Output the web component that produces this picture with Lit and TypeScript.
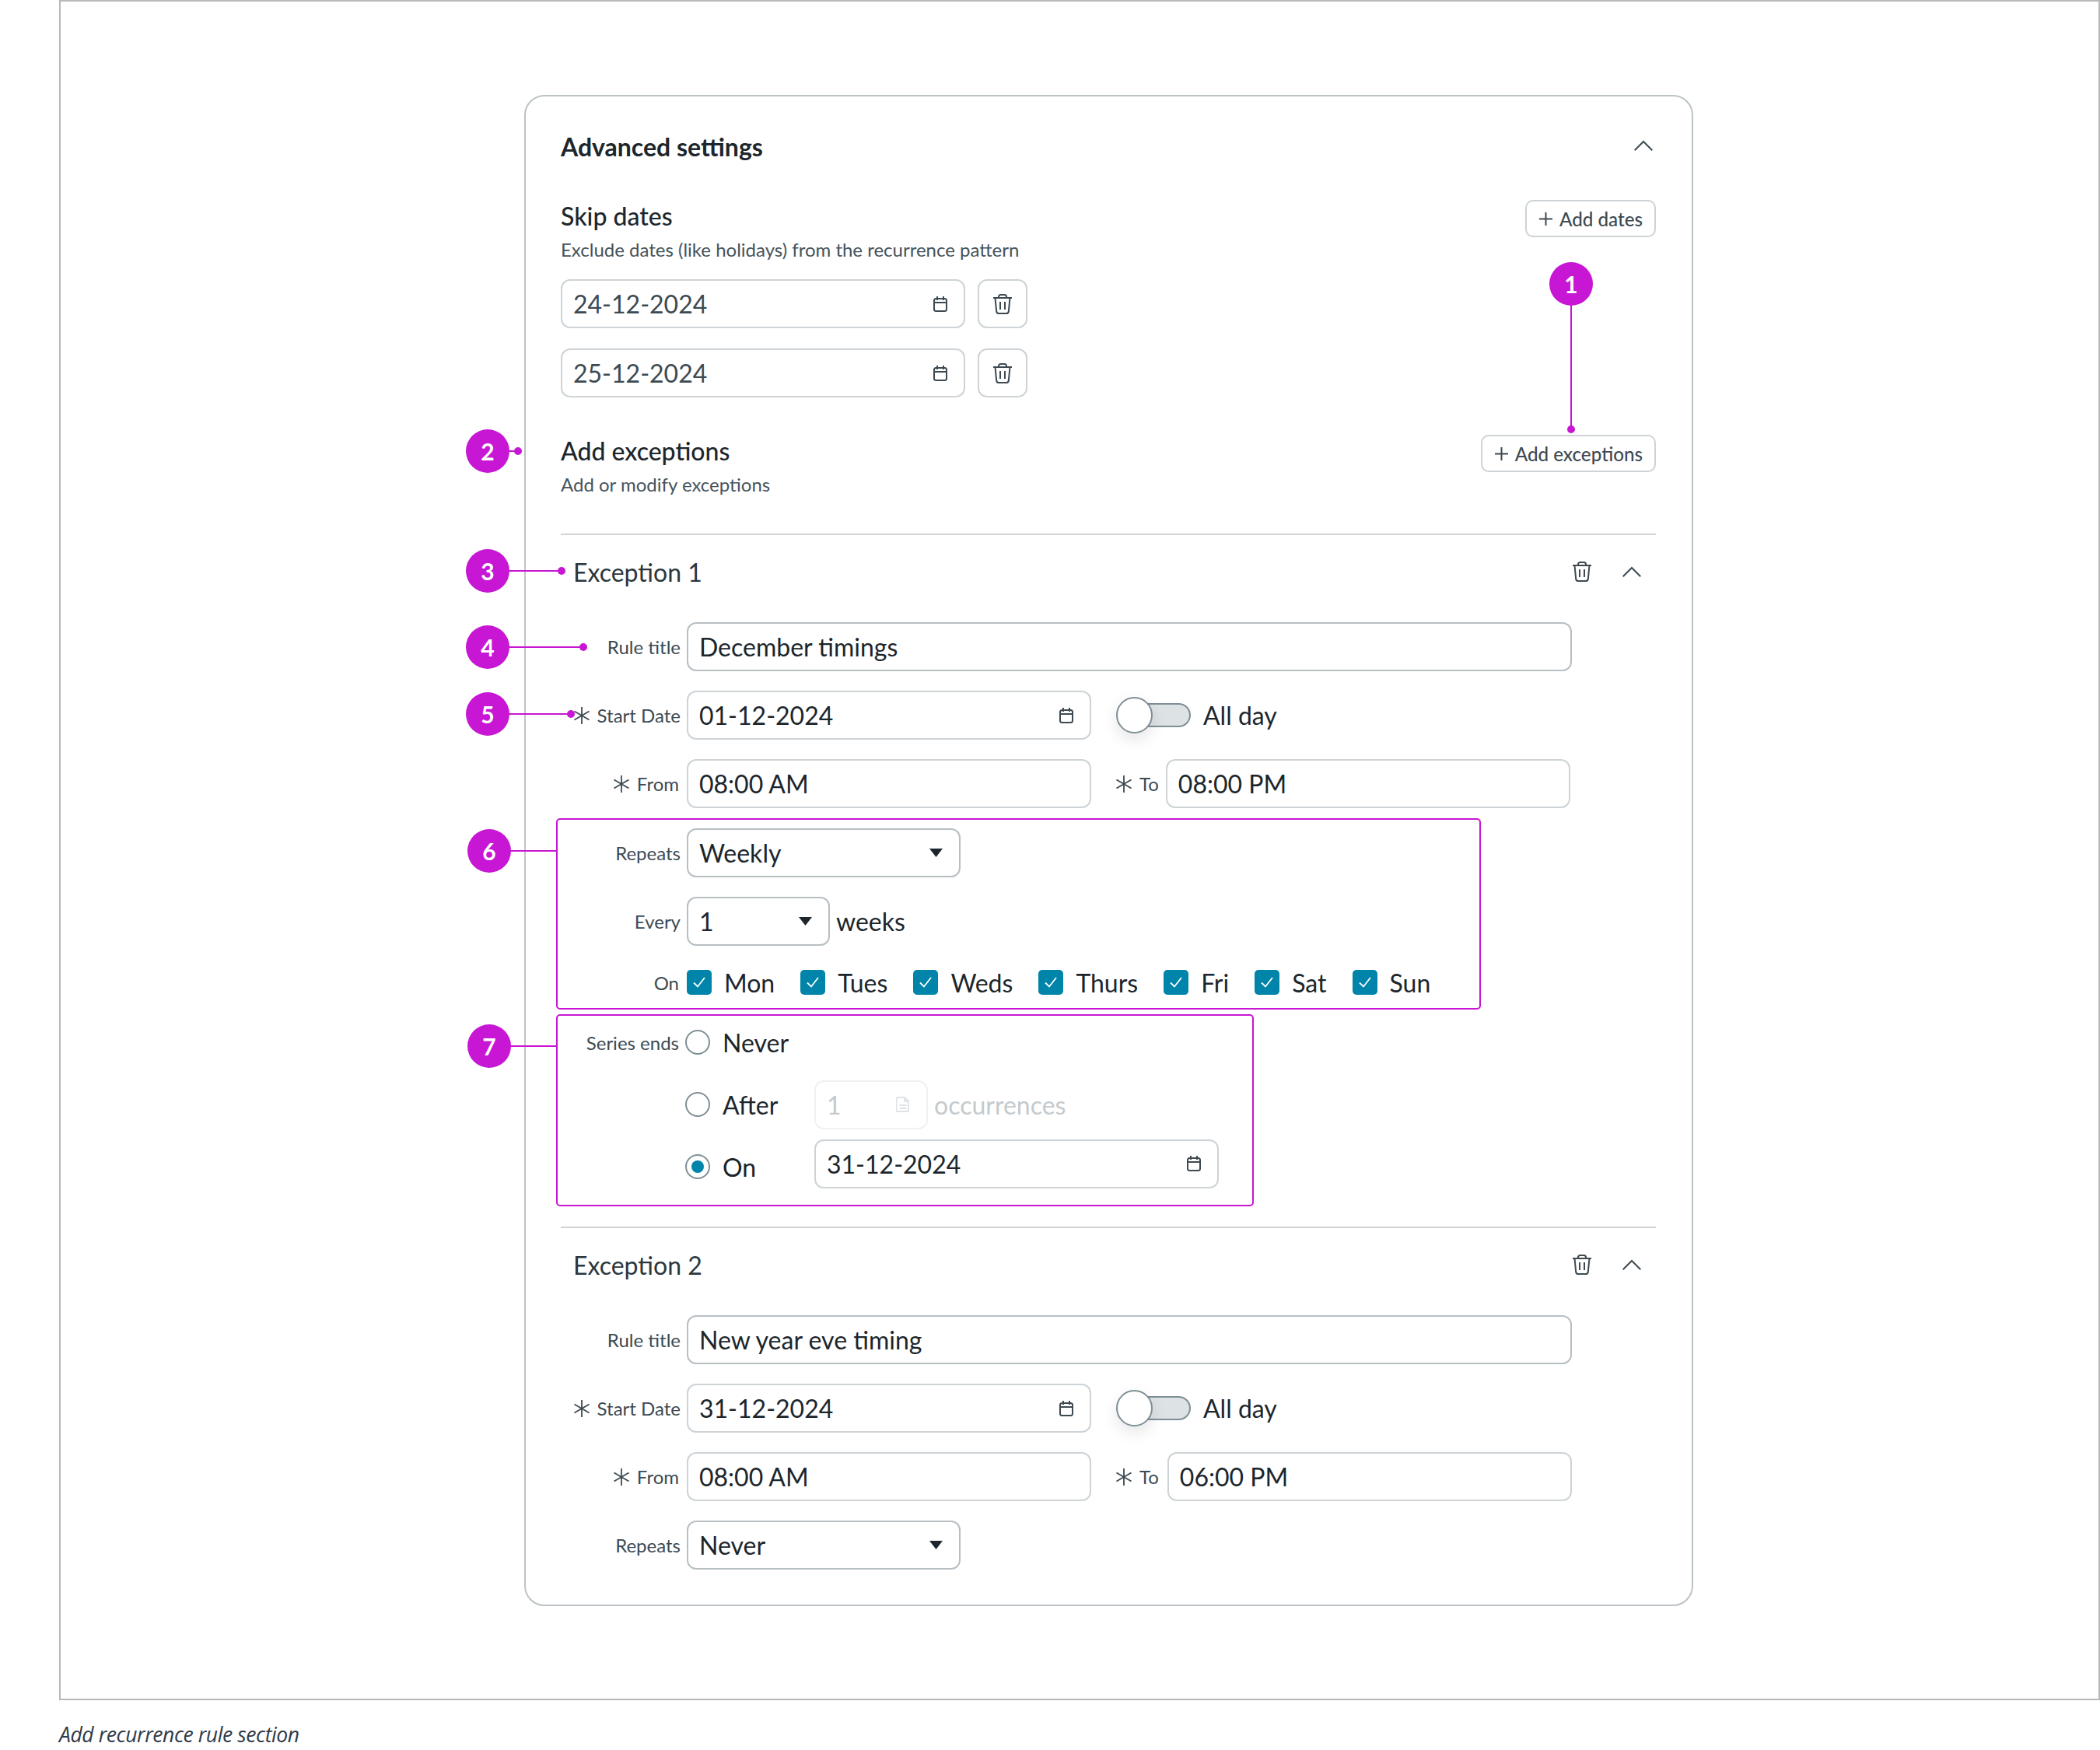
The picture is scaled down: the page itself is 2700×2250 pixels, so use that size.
import { LitElement, html, css } from "lit";
import { customElement } from "lit/decorators.js";

const cal = html`<svg class="ic cal" viewBox="0 0 18 20"><rect x="1" y="3" width="16" height="16" rx="2.500" /><path d="M1 8h16M5 0v5M13 0v5" /></svg>`;
const trash = html`<svg class="ic trash" viewBox="0 0 24 28"><path d="M0 6h24M7 6V4.500A2.500 2.500 0 0 1 9.500 2h5A2.500 2.500 0 0 1 17 4.500V6M2.500 6l1.700 17.500a3 3 0 0 0 3 2.500h9.600a3 3 0 0 0 3-2.500L21.500 6M9 11v10M15 11v10" /></svg>`;
const chev = html`<svg class="ic chev" viewBox="0 0 24 14"><path d="M0.700 13.300L12 2l11.300 11.300" /></svg>`;
const star = html`<svg class="ic star" viewBox="0 0 22 22"><path d="M11 0v22M1.500 5.500l19 11M20.500 5.500l-19 11" /></svg>`;
const plus = html`<svg class="ic plus" viewBox="0 0 19 19"><path d="M9.500 1v17M1 9.500h17" /></svg>`;
const caret = html`<svg class="caret" viewBox="0 0 17 11"><path d="M0 0h17L8.500 11z" /></svg>`;
const check = html`<svg class="tick" viewBox="0 0 20 20"><path d="M3 10.500l5 5L17 4" /></svg>`;
const doc = html`<svg class="ic doc" viewBox="0 0 18 20"><path d="M2.500 1h8.500l5 5v11a2 2 0 0 1-2 2h-11.500a2 2 0 0 1-2-2V3a2 2 0 0 1 2-2zM11 1v5h5M4.500 11h9M4.500 15h9" /></svg>`;

const marks = [
  { n: 1, x: 2020, y: 365, x2: 2020, y2: 552, dot: true },
  { n: 2, x: 627, y: 580, x2: 666, y2: 580, dot: true },
  { n: 3, x: 627, y: 734, x2: 722, y2: 734, dot: true },
  { n: 4, x: 627, y: 832, x2: 750, y2: 832, dot: true },
  { n: 5, x: 627, y: 918, x2: 734, y2: 918, dot: true },
  { n: 6, x: 629, y: 1094, x2: 715, y2: 1094, dot: false },
  { n: 7, x: 629, y: 1345, x2: 715, y2: 1345, dot: false },
];

@customElement("app-root")
export class AppRoot extends LitElement {
  static styles = css`
    :host { display: block; width: 2700px; height: 2250px; position: relative; background: #fff; font-family: Lato, "Liberation Sans", sans-serif; color: #1c262c; overflow: hidden; }
    .frame { box-sizing: border-box; margin-left: 76px; width: 2624px; height: 2186px; border: 2px solid #b8b8b8; padding: 120px 0 0 596px; }
    .card { box-sizing: border-box; width: 1503px; height: 1943px; border: 2px solid #bcc3c6; border-radius: 26px; padding: 45px 46px 0 45px; }
    .title { font-size: 32px; line-height: 40px; font-weight: 700; height: 40px; }
    .top { display: flex; justify-content: space-between; align-items: center; margin-bottom: 48px; padding-right: 4px; }
    .top .chev { margin-bottom: 4px; }
    .head { display: flex; justify-content: space-between; align-items: flex-start; }
    .head.ex { margin-bottom: 48px; }
    .h { font-size: 32px; line-height: 42px; font-weight: 500; }
    .sub { font-size: 24px; line-height: 30px; margin-top: 7px; color: #46545c; }
    .btn { box-sizing: border-box; height: 48px; display: flex; align-items: center; gap: 8px; padding: 0 15px; border: 2px solid #cdd3d6; border-radius: 10px; font-size: 24.200px; font-weight: 500; color: #3d4a52; white-space: nowrap; }
    .dates { display: flex; flex-direction: column; gap: 26px; margin-top: 23px; margin-bottom: 48px; }
    .date-row { display: flex; gap: 16px; }
    .input { box-sizing: border-box; height: 63px; border: 2px solid #cdd3d6; border-radius: 12px; display: flex; align-items: center; justify-content: space-between; padding: 0 21px 0 14px; font-size: 32px; background: #fff; white-space: nowrap; }
    .input.dim { color: #3d4a52; }
    .input.dark { border-color: #b8bfc3; }
    .w520 { width: 520px; }
    .w-full { width: 1138px; }
    .w-sel { width: 352px; }
    .w-num { width: 184px; }
    .tbtn { box-sizing: border-box; width: 64px; height: 63px; border: 2px solid #cdd3d6; border-radius: 12px; display: flex; align-items: center; justify-content: center; }
    .ic { fill: none; stroke: #3d4a52; stroke-width: 2; flex: none; }
    .cal { width: 18px; height: 20px; }
    .trash { width: 24px; height: 28px; }
    .chev { width: 24px; height: 14px; }
    .plus { width: 19px; height: 19px; }
    .star { width: 22px; height: 22px; stroke-width: 1.800; }
    .doc { width: 18px; height: 20px; stroke: #dfe3e5; }
    .caret { width: 17px; height: 11px; fill: #1c262c; }
    .divider { height: 2px; background: #cdd3d6; }
    .ex-head { display: flex; align-items: center; justify-content: space-between; height: 40px; margin: 27px 0 45px; padding: 0 19px 0 16px; font-size: 32px; color: #2c373d; }
    .ex-actions { display: flex; align-items: center; gap: 40px; }
    .rows { display: flex; flex-direction: column; gap: 25px; }
    .row { display: flex; align-items: center; }
    .label { width: 154px; margin-right: 8px; font-size: 24px; color: #3d4a52; display: flex; justify-content: flex-end; align-items: center; gap: 9px; white-space: nowrap; flex: none; }
    .label.in { width: 152px; margin-right: 10px; }
    .toggle { position: relative; width: 96px; height: 47px; margin: 0 16px 0 32px; flex: none; }
    .track { position: absolute; left: 15px; right: 0; top: 8px; height: 31px; box-sizing: border-box; background: #dde2e5; border: 2px solid #7f8f96; border-radius: 16px; }
    .knob { position: absolute; left: 0; top: 0; box-sizing: border-box; width: 47px; height: 47px; border-radius: 50%; border: 2px solid #7f8f96; background: #fff; box-shadow: 0 8px 20px rgba(0, 0, 0, 0.1); }
    .txt { font-size: 32px; }
    .weeks { margin-left: 8px; }
    .to { width: auto; margin-left: 31px; margin-right: 9px; }
    .to.wide { margin-right: 11px; }
    .box { box-sizing: border-box; border: 2px solid #c716d4; border-radius: 5px; margin-left: -6px; }
    .box6 { width: 1189px; margin-top: 13px; padding: 11px 0 17px 4px; display: flex; flex-direction: column; gap: 25px; }
    .box7 { width: 897px; margin-top: 6px; padding: 18px 0 22px 2px; }
    .on-row { height: 32px; margin-top: 6px; }
    .days { display: flex; gap: 33px; }
    .day { display: flex; align-items: center; gap: 16px; font-size: 32px; }
    .cb { width: 32px; height: 32px; background: #0084a9; border-radius: 5px; display: flex; align-items: center; justify-content: center; flex: none; }
    .tick { width: 20px; height: 20px; fill: none; stroke: #fff; stroke-width: 1.800; }
    .s-rows { display: flex; flex-direction: column; }
    .radio { box-sizing: border-box; width: 32px; height: 32px; border: 2px solid #7f8f96; border-radius: 50%; display: flex; align-items: center; justify-content: center; flex: none; }
    .radio i { width: 16px; height: 16px; background: #0084a9; border-radius: 50%; }
    .rad { width: 166px; display: flex; align-items: center; gap: 16px; font-size: 32px; flex: none; }
    .rad.low { margin-top: 8px; }
    .n-row { height: 32px; margin-bottom: 33px; }
    .a-row { height: 62px; margin-bottom: 14px; }
    .a-row.last { margin-bottom: 0; }
    .muted { width: 146px; border-color: #eff1f2; color: #c4cacd; }
    .mutedtext { color: #c4cacd; font-size: 32px; margin-left: 8px; }
    .spacer { height: 26px; }
    .last-row { margin-top: 25px; }
    .caption { position: absolute; left: 76px; top: 2213px; font-size: 26.500px; letter-spacing: -0.400px; line-height: 34px; font-style: italic; color: #2f3a48; font-family: "Open Sans", sans-serif; }
    .badge { position: absolute; width: 56px; height: 56px; margin: -28px 0 0 -28px; border-radius: 50%; background: #c716d4; color: #fff; font-size: 30px; font-weight: 700; display: flex; align-items: center; justify-content: center; }
    .line { position: absolute; background: #c716d4; }
    .dot { position: absolute; width: 10px; height: 10px; margin: -5px 0 0 -5px; border-radius: 50%; background: #c716d4; }
  `;

  private exception(name: string, title: string, start: string, toTime: string, wide: boolean) {
    return html`
      <div class="divider"></div>
      <div class="ex-head"><span>${name}</span><div class="ex-actions">${trash}${chev}</div></div>
      <div class="rows">
        <div class="row"><div class="label">Rule title</div><div class="input dark w-full">${title}</div></div>
        <div class="row"><div class="label">${star}Start Date</div><div class="input w520">${start}${cal}</div>
          <div class="toggle"><div class="track"></div><div class="knob"></div></div><span class="txt">All day</span></div>
        <div class="row"><div class="label in">${star}From</div><div class="input w520">08:00 AM</div>
          <div class="label to ${wide ? "wide" : ""}">${star}To</div><div class="input w520">${toTime}</div></div>
      </div>`;
  }

  private day(n: string) {
    return html`<div class="day"><span class="cb">${check}</span>${n}</div>`;
  }

  render() {
    return html`
      <div class="frame">
        <div class="card">
          <div class="top"><div class="title">Advanced settings</div>${chev}</div>
          <div class="head">
            <div><div class="h">Skip dates</div><div class="sub">Exclude dates (like holidays) from the recurrence pattern</div></div>
            <div class="btn">${plus}Add dates</div>
          </div>
          <div class="dates">
            ${["24-12-2024", "25-12-2024"].map((d) => html`<div class="date-row"><div class="input dim w520">${d}${cal}</div><div class="tbtn">${trash}</div></div>`)}
          </div>
          <div class="head ex">
            <div><div class="h">Add exceptions</div><div class="sub">Add or modify exceptions</div></div>
            <div class="btn">${plus}Add exceptions</div>
          </div>
          ${this.exception("Exception 1", "December timings", "01-12-2024", "08:00 PM", false)}
          <div class="box box6">
            <div class="row"><div class="label">Repeats</div><div class="input dark w-sel">Weekly${caret}</div></div>
            <div class="row"><div class="label">Every</div><div class="input dark w-num">1${caret}</div><span class="txt weeks">weeks</span></div>
            <div class="row on-row"><div class="label in">On</div><div class="days">${["Mon", "Tues", "Weds", "Thurs", "Fri", "Sat", "Sun"].map((d) => this.day(d))}</div></div>
          </div>
          <div class="box box7">
            <div class="s-rows">
              <div class="row n-row"><div class="label">Series ends</div><div class="rad"><span class="radio"></span>Never</div></div>
              <div class="row a-row"><div class="label"></div><div class="rad"><span class="radio"></span>After</div><div class="input muted">1${doc}</div><span class="mutedtext">occurrences</span></div>
              <div class="row a-row last"><div class="label"></div><div class="rad low"><span class="radio"><i></i></span>On</div><div class="input w520">31-12-2024${cal}</div></div>
            </div>
          </div>
          <div class="spacer"></div>
          ${this.exception("Exception 2", "New year eve timing", "31-12-2024", "06:00 PM", true)}
          <div class="row last-row"><div class="label">Repeats</div><div class="input dark w-sel">Never${caret}</div></div>
        </div>
      </div>
      <div class="caption">Add recurrence rule section</div>
      ${marks.map((m) => {
        const vertical = m.x === m.x2;
        const style = vertical
          ? `left:${m.x - 1}px;top:${m.y}px;width:2px;height:${m.y2 - m.y}px`
          : `left:${m.x}px;top:${m.y - 1}px;width:${m.x2 - m.x}px;height:2px`;
        return html`<div class="line" style=${style}></div>
          ${m.dot ? html`<div class="dot" style="left:${m.x2}px;top:${m.y2}px"></div>` : ""}
          <div class="badge" style="left:${m.x}px;top:${m.y}px">${m.n}</div>`;
      })}
    `;
  }
}
